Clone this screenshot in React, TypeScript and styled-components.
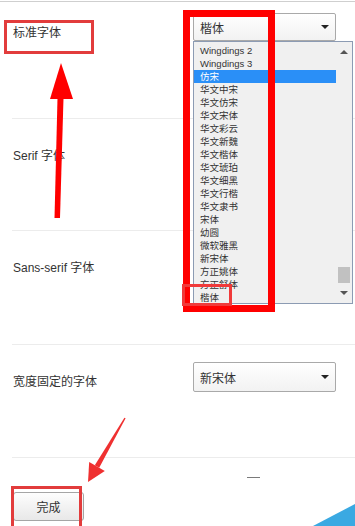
import React from 'react';
import styled, { createGlobalStyle } from 'styled-components';

const GlobalStyle = createGlobalStyle`
    html, body {
        margin: 0;
        padding: 0;
        background: #fff;
    }
    body {
        font-family: "Liberation Sans", "Noto Sans CJK SC", sans-serif;
    }
`;

const Page = styled.div`
    position: relative;
    width: 355px;
    height: 526px;
    overflow: hidden;
    background: #fff;
`;

const TopRule = styled.div`
    height: 1px;
    margin-top: 1px;
    background: #cfcfcf;
`;

const Row = styled.div<{ $h: number }>`
    display: flex;
    justify-content: space-between;
    align-items: flex-start;
    box-sizing: border-box;
    height: ${ props => props.$h }px;
    margin-left: 12px;
    padding: 0 19px 0 1px;
    border-bottom: 1px solid #ececec;
`;

const Label = styled.div<{ $top: number }>`
    margin-top: ${ props => props.$top }px;
    font-size: 12px;
    line-height: 18px;
    color: #333;
`;

const SelectWrap = styled.div<{ $top: number }>`
    position: relative;
    margin-top: ${ props => props.$top }px;
    width: 143px;
    z-index: 2;
`;

const Select = styled.div<{ $h: number }>`
    box-sizing: border-box;
    height: ${ props => props.$h }px;
    display: flex;
    align-items: center;
    justify-content: space-between;
    padding: 0 6px 0 6px;
    border: 1px solid #a9a9a9;
    border-radius: 2px;
    background: linear-gradient(#ffffff, #f2f2f2);
    font-size: 12px;
    color: #333;
`;

const Caret = styled.span<{ $up?: boolean; $color?: string }>`
    width: 0;
    height: 0;
    border-left: 4px solid transparent;
    border-right: 4px solid transparent;
    ${ props => props.$up
        ? `border-bottom: 4px solid ${ props.$color || '#222' };`
        : `border-top: 4px solid ${ props.$color || '#222' };` }
`;

const DropList = styled.div`
    position: absolute;
    top: 100%;
    left: 0;
    width: 160px;
    height: 263px;
    box-sizing: border-box;
    border: 1px solid #8c9bb3;
    background: #f0f0f0;
    display: flex;
`;

const Items = styled.div`
    flex: 1;
    padding-top: 2px;
    overflow: hidden;
`;

const Item = styled.div<{ $active?: boolean }>`
    height: 13px;
    line-height: 13px;
    padding-left: 6px;
    font-size: 9.5px;
    white-space: nowrap;
    color: ${ props => props.$active ? '#fff' : '#333' };
    background: ${ props => props.$active ? '#2a8ff7' : 'transparent' };
`;

const ScrollBar = styled.div`
    width: 16px;
    display: flex;
    flex-direction: column;
`;

const ScrollBtn = styled.div`
    height: 20px;
    display: flex;
    align-items: center;
    justify-content: center;
`;

const Track = styled.div`
    flex: 1;
    display: flex;
    flex-direction: column;
    justify-content: flex-end;
    align-items: center;
`;

const Thumb = styled.div`
    width: 12px;
    height: 16px;
    background: #c1c1c1;
`;

const Footer = styled.div`
    padding: 34px 0 0 13px;
`;

const Button = styled.button`
    box-sizing: border-box;
    width: 71px;
    height: 29px;
    border: 1px solid #a5a5a5;
    border-radius: 3px;
    background: linear-gradient(#fdfdfd, #e8e8e8);
    font-family: inherit;
    font-size: 12px;
    color: #333;
    padding: 0;
`;

const Mark = styled.div<{ $x: number; $y: number; $w: number; $h: number; $t: number; $c: string }>`
    position: absolute;
    left: ${ props => props.$x }px;
    top: ${ props => props.$y }px;
    width: ${ props => props.$w }px;
    height: ${ props => props.$h }px;
    box-sizing: border-box;
    border: ${ props => props.$t }px solid ${ props => props.$c };
    pointer-events: none;
    z-index: 5;
`;

const Overlay = styled.svg`
    position: absolute;
    left: 0;
    top: 0;
    pointer-events: none;
    z-index: 6;
`;

const fonts = [
    'Wingdings 2', 'Wingdings 3', '仿宋', '华文中宋', '华文仿宋', '华文宋体', '华文彩云',
    '华文新魏', '华文楷体', '华文琥珀', '华文细黑', '华文行楷', '华文隶书', '宋体', '幼圆',
    '微软雅黑', '新宋体', '方正姚体', '方正舒体', '楷体',
];

export default function App() {
    return (
        <Page>
            <GlobalStyle />
            <TopRule />
            <Row $h = { 117 }>
                <Label $top = { 22 }>标准字体</Label>
                <SelectWrap $top = { 11 }>
                    <Select $h = { 28 }>楷体<Caret /></Select>
                    <DropList>
                        <Items>
                            { fonts.map(f => <Item key = { f } $active = { f === '仿宋' }>{ f }</Item>) }
                        </Items>
                        <ScrollBar>
                            <ScrollBtn><Caret $up $color = '#555' /></ScrollBtn>
                            <Track><Thumb /></Track>
                            <ScrollBtn><Caret $color = '#555' /></ScrollBtn>
                        </ScrollBar>
                    </DropList>
                </SelectWrap>
            </Row>
            <Row $h = { 112 }>
                <Label $top = { 28 }>Serif 字体</Label>
            </Row>
            <Row $h = { 114 }>
                <Label $top = { 28 }>Sans-serif 字体</Label>
            </Row>
            <Row $h = { 113 }>
                <Label $top = { 28 }>宽度固定的字体</Label>
                <SelectWrap $top = { 17 }>
                    <Select $h = { 30 }>新宋体<Caret /></Select>
                </SelectWrap>
            </Row>
            <Footer>
                <Button>完成</Button>
            </Footer>

            <Mark $x = { 4 } $y = { 20 } $w = { 90 } $h = { 34 } $t = { 3 } $c = '#e23c3c' />
            <Mark $x = { 183 } $y = { 10 } $w = { 92 } $h = { 302 } $t = { 7 } $c = '#ff0000' />
            <Mark $x = { 182 } $y = { 284 } $w = { 50 } $h = { 22 } $t = { 3 } $c = '#f03a3a' />
            <Mark $x = { 11 } $y = { 486 } $w = { 71 } $h = { 44 } $t = { 3 } $c = '#e23c3c' />

            <Overlay width = '355' height = '526' viewBox = '0 0 355 526'>
                <polygon points = '61,63 50,99 73,99' fill = '#ff0000' />
                <polygon points = '57.5,98 63.5,98 60,218 54.5,218' fill = '#ff0000' />
                <polygon points = '125.6,418.3 124.4,417.7 94.8,465.2 99.2,467.7' fill = '#ef3030' />
                <polygon points = '88,482 89.2,461.9 104.8,470.9' fill = '#ef3030' />
                <line x1 = '247' y1 = '477.5' x2 = '260' y2 = '477.5' stroke = '#7a7a7a' strokeWidth = '1' />
                <polygon points = '313,526 355,504 355,526' fill = '#3aa9e2' />
            </Overlay>
        </Page>
    );
};
